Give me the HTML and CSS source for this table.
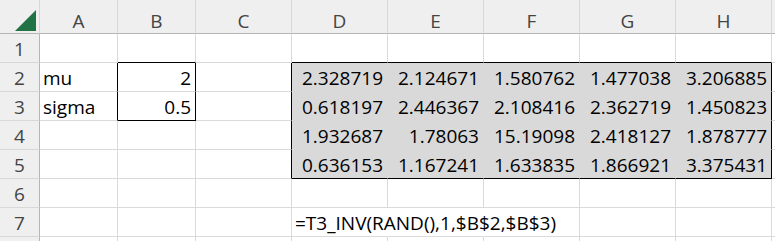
FILE: index.html
```html
<!DOCTYPE html>
<html lang="en">
<head>
  <meta charset="UTF-8">
  <title>T3_INV sample</title>
  <link rel="stylesheet" href="styles.css">
</head>
<body>

  <div class="sheet" id="sheet"></div>

  <script>
    const columns = ['A', 'B', 'C', 'D', 'E', 'F', 'G', 'H', ''];
    const rowCount = 7;

    const cells = {
      A2: 'mu', B2: 2,
      A3: 'sigma', B3: 0.5,
      D7: '=T3_INV(RAND(),1,$B$2,$B$3)'
    };

    const draws = [
      [2.328719, 2.124671, 1.580762, 1.477038, 3.206885],
      [0.618197, 2.446367, 2.108416, 2.362719, 1.450823],
      [1.932687, 1.78063, 15.19098, 2.418127, 1.878777],
      [0.636153, 1.167241, 1.633835, 1.866921, 3.375431]
    ];
    draws.forEach((row, r) => {
      row.forEach((v, c) => cells[columns[3 + c] + (r + 2)] = v);
    });

    // [firstCol, firstRow, lastCol, lastRow], columns counted from A = 0
    const outlines = [[1, 2, 1, 3], [3, 2, 7, 5]];
    const filled = [3, 2, 7, 5];
    const spill = ['D7', 'E7'];

    const inRange = (rg, c, r) => c >= rg[0] && c <= rg[2] && r >= rg[1] && r <= rg[3];

    const sheet = document.getElementById('sheet');

    function addCell(cls, text) {
      const div = document.createElement('div');
      div.className = cls;
      if (text !== undefined) div.textContent = text;
      sheet.appendChild(div);
      return div;
    }

    function renderSheet() {
      const corner = addCell('cell corner');
      corner.innerHTML = '<svg width="21" height="21" viewBox="0 0 21 21"><polygon points="21,0 21,21 0,21" fill="#217346"/></svg>';
      columns.forEach(name => addCell('cell col-head', name));

      for (let r = 1; r <= rowCount; r++) {
        addCell('cell row-head', r);
        columns.forEach((name, c) => {
          const ref = name + r;
          const value = cells[ref];
          const cls = ['cell'];
          if (typeof value === 'number') cls.push('num');
          if (inRange(filled, c, r)) cls.push('fill');
          outlines.forEach(o => {
            const rowsIn = r >= o[1] && r <= o[3];
            const colsIn = c >= o[0] && c <= o[2];
            if (rowsIn && (c === o[2] || c === o[0] - 1)) cls.push('edge-r');
            if (colsIn && (r === o[3] || r === o[1] - 1)) cls.push('edge-b');
          });
          if (spill.includes(ref)) cls.push('spill');
          addCell(cls.join(' '), value);
        });
      }

      // next row only peeks in at the bottom edge
      addCell('cell row-head');
      columns.forEach(() => addCell('cell'));
    }

    renderSheet();
  </script>

</body>
</html>
```

FILE: styles.css
```css
body {
  margin: 0;
  background: #fff;
  font-family: 'Open Sans', 'Liberation Sans', sans-serif;
  overflow: hidden;
}

.sheet {
  display: grid;
  grid-template-columns: 40px 78px 78px repeat(6, 96px) 1fr;
  grid-template-rows: 34px repeat(8, 29px);
}

.cell {
  box-sizing: border-box;
  border-right: 1px solid #dadada;
  border-bottom: 1px solid #dadada;
  padding: 2px 4px 0 3px;
  font-size: 19px;
  line-height: 27px;
  color: #000;
  white-space: nowrap;
  overflow: visible;
}

.num {
  text-align: right;
}

.fill {
  background: #d9d9d9;
  border-color: #d9d9d9;
}

.edge-r {
  border-right-color: #000;
}

.edge-b {
  border-bottom-color: #000;
}

/* text running on into the next column hides the gridline */
.spill {
  border-right-color: transparent;
}

.corner {
  display: flex;
  align-items: flex-end;
  justify-content: flex-end;
  padding: 0 3px 2px 0;
  background: #efefef;
  border-bottom-color: #b5b5b5;
  border-right-color: #d8d8d8;
}

.corner svg {
  display: block;
}

.col-head {
  background: #efefef;
  border-bottom-color: #b5b5b5;
  border-right-color: #d8d8d8;
  padding: 5px 0 0;
  line-height: 33px;
  color: #444;
  text-align: center;
}

.row-head {
  background: #efefef;
  border-right-color: #b5b5b5;
  border-bottom-color: #d8d8d8;
  padding: 2px 0 0;
  color: #444;
  text-align: center;
}
```
